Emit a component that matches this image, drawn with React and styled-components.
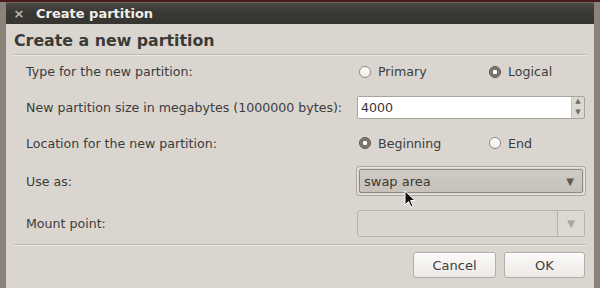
import styled, { createGlobalStyle } from 'styled-components';

const GlobalStyle = createGlobalStyle`
  html, body {
    margin: 0;
    padding: 0;
    background: #4a1a1a;
    overflow: hidden;
  }
  body {
    font-family: "DejaVu Sans", "Liberation Sans", sans-serif;
    font-size: 12.6px;
    color: #3c3c3c;
  }
`;

const Window = styled.div`
  position: relative;
  margin-top: 2px;
  width: 600px;
  height: 286px;
  display: flex;
  flex-direction: column;
  box-sizing: border-box;
  border-left: 6px solid #8a8379;
  border-right: 6px solid #8a8379;
  background: #dad6cf;
`;

const TitleBar = styled.div`
  height: 21px;
  display: flex;
  align-items: center;
  background: linear-gradient(#4a4944, #3a3935 40%, #353430);
  border-top: 1px solid #6a6862;
  color: #f0eee9;
`;

const CloseBtn = styled.span`
  width: 22px;
  margin-left: 2px;
  text-align: center;
  color: #bcb9b2;
  font-size: 13px;
  font-weight: bold;
`;

const Title = styled.span`
  margin-left: 6px;
  font-weight: bold;
  font-size: 13px;
`;

const Body = styled.div`
  flex: 1;
  padding: 0 8px;
  display: flex;
  flex-direction: column;
`;

const Heading = styled.h1`
  margin: 0;
  padding: 7px 0 0 0;
  height: 23px;
  font-size: 15.8px;
  font-weight: bold;
  color: #3a3a38;
`;

const Separator = styled.div`
  height: 1px;
  background: #bdb8b0;
  border-bottom: 1px solid #ece9e4;
  margin: ${(p) => p.$margin || '0'};
`;

const Form = styled.div`
  display: flex;
  flex-direction: column;
  padding-left: 12px;
`;

const Row = styled.div`
  height: ${(p) => p.$h}px;
  display: grid;
  grid-template-columns: 331px 228px;
  align-items: center;
`;

const Label = styled.span`
  color: #3c3c3c;
`;

const RadioGroup = styled.div`
  display: grid;
  grid-template-columns: 130px 1fr;
  padding-left: 2px;
`;

const RadioItem = styled.label`
  display: flex;
  align-items: center;
  gap: 7px;
`;

const RadioDot = styled.span`
  width: 12px;
  height: 12px;
  flex: none;
  border-radius: 50%;
  box-sizing: border-box;
  border: 1px solid ${(p) => (p.$on ? '#54504b' : '#8d8881')};
  background: ${(p) =>
    p.$on
      ? 'radial-gradient(circle, #ffffff 0 2px, #6e6660 2.6px, #9a938c 6px)'
      : 'linear-gradient(#ffffff, #f0eeeb)'};
`;

const Spin = styled.div`
  display: flex;
  height: 23px;
  box-sizing: border-box;
  border: 1px solid #aaa49c;
  border-radius: 2px;
  background: #dcd8d2;
`;

const SpinInput = styled.div`
  flex: 1;
  background: #ffffff;
  display: flex;
  align-items: center;
  padding-left: 3px;
  color: #333;
  border-right: 1px solid #c8c3bb;
`;

const SpinArrows = styled.div`
  width: 12px;
  display: flex;
  flex-direction: column;
  justify-content: space-around;
  align-items: center;
  color: #6e6a64;
  font-size: 7px;
  line-height: 1;
`;

const Combo = styled.div`
  height: ${(p) => p.$h}px;
  box-sizing: border-box;
  display: flex;
  align-items: stretch;
  border-radius: 3px;
  border: 1px solid ${(p) => (p.$disabled ? '#b7b2aa' : '#e9e6e1')};
  box-shadow: ${(p) => (p.$disabled ? 'none' : '0 0 0 1px #aca69e')};
  padding: ${(p) => (p.$disabled ? '0' : '1px')};
`;

const ComboFace = styled.div`
  flex: 1;
  display: flex;
  align-items: center;
  padding-left: 4px;
  padding-right: 8px;
  border-radius: 2px;
  background: ${(p) => (p.$disabled ? '#d9d5ce' : 'linear-gradient(#cfcac3, #c6c1b9)')};
  border: ${(p) => (p.$disabled ? 'none' : '1px solid #908a82')};
  font-size: 13px;
  color: #3a3936;
`;

const ComboText = styled.span`
  flex: 1;
`;

const Arrow = styled.span`
  font-size: 10px;
  color: ${(p) => (p.$disabled ? '#a9a59f' : '#5e5a55')};
`;

const ArrowBox = styled.div`
  width: 26px;
  display: flex;
  align-items: center;
  justify-content: center;
  border-left: 1px solid #b7b2aa;
  background: #dcd8d2;
`;

const Buttons = styled.div`
  display: flex;
  justify-content: flex-end;
  gap: 8px;
  padding: 6px 1px 0 0;
`;

const Button = styled.button`
  width: ${(p) => p.$w}px;
  height: 26px;
  font-family: inherit;
  font-size: 13px;
  color: #3c3c3c;
  border: 1px solid #b3aea6;
  border-radius: 3px;
  background: linear-gradient(#fbfaf9, #ece9e5);
  box-shadow: inset 0 1px 0 #ffffff;
`;

const Cursor = styled.svg`
  position: absolute;
  left: 398px;
  top: 188px;
`;

function Radio({ on, children }) {
  return (
    <RadioItem>
      <RadioDot $on={on} />
      <span>{children}</span>
    </RadioItem>
  );
}

export default function App() {
  return (
    <>
      <GlobalStyle />
      <Window>
        <TitleBar>
          <CloseBtn>×</CloseBtn>
          <Title>Create partition</Title>
        </TitleBar>
        <Body>
          <Heading>Create a new partition</Heading>
          <Separator />
          <Form>
            <Row $h={31}>
              <Label>Type for the new partition:</Label>
              <RadioGroup>
                <Radio>Primary</Radio>
                <Radio on>Logical</Radio>
              </RadioGroup>
            </Row>
            <Row $h={40}>
              <Label>New partition size in megabytes (1000000 bytes):</Label>
              <Spin>
                <SpinInput>4000</SpinInput>
                <SpinArrows>
                  <span>▲</span>
                  <span>▼</span>
                </SpinArrows>
              </Spin>
            </Row>
            <Row $h={32}>
              <Label>Location for the new partition:</Label>
              <RadioGroup>
                <Radio on>Beginning</Radio>
                <Radio>End</Radio>
              </RadioGroup>
            </Row>
            <Row $h={44}>
              <Label>Use as:</Label>
              <Combo $h={28}>
                <ComboFace>
                  <ComboText>swap area</ComboText>
                  <Arrow>▼</Arrow>
                </ComboFace>
              </Combo>
            </Row>
            <Row $h={40}>
              <Label>Mount point:</Label>
              <Combo $h={27} $disabled>
                <ComboFace $disabled />
                <ArrowBox>
                  <Arrow $disabled>▼</Arrow>
                </ArrowBox>
              </Combo>
            </Row>
          </Form>
          <Separator $margin="1px 0 0 0" />
          <Buttons>
            <Button $w={83}>Cancel</Button>
            <Button $w={81}>OK</Button>
          </Buttons>
        </Body>
        <Cursor width="14" height="20" viewBox="0 0 14 20">
          <path d="M1 1 L1 15 L4.5 11.5 L7 17 L9 16 L6.5 10.5 L11 10.5 Z" fill="#111" stroke="#fff" strokeWidth="1" />
        </Cursor>
      </Window>
    </>
  );
}
